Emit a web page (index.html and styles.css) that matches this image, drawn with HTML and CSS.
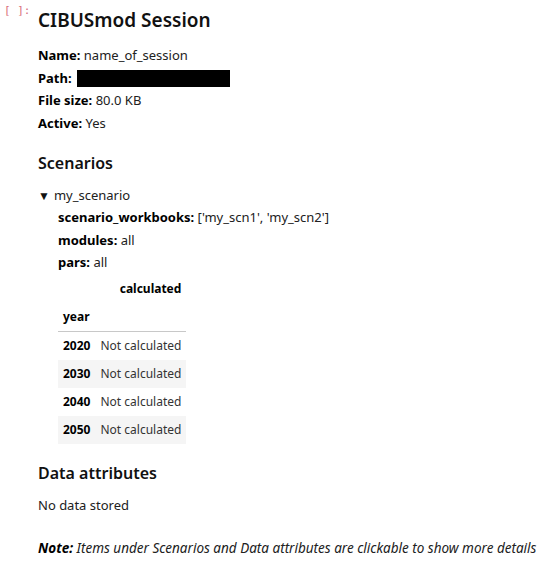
FILE: index.html
```html
<!DOCTYPE html>
<html>
<head>
<meta charset="utf-8">
<link rel="stylesheet" href="styles.css">
</head>
<body>
<div class="cell">
  <div class="prompt">[ ]:</div>
  <div class="output">
    <h2 class="title">CIBUSmod Session</h2>
    <div class="info">
      <div class="line"><b>Name:</b> name_of_session</div>
      <div class="line"><b>Path:</b> <span class="redact"></span></div>
      <div class="line"><b>File size:</b> 80.0 KB</div>
      <div class="line"><b>Active:</b> Yes</div>
    </div>
    <h3 class="section">Scenarios</h3>
    <div class="scenario">
      <div class="summary"><span class="tri">▼</span>my_scenario</div>
      <div class="details">
        <div class="line"><b>scenario_workbooks:</b> ['my_scn1', 'my_scn2']</div>
        <div class="line"><b>modules:</b> all</div>
        <div class="line"><b>pars:</b> all</div>
        <table class="df">
          <thead>
            <tr><th></th><th>calculated</th></tr>
            <tr class="idx"><th>year</th><th></th></tr>
          </thead>
          <tbody>
            <tr><th>2020</th><td>Not calculated</td></tr>
            <tr class="alt"><th>2030</th><td>Not calculated</td></tr>
            <tr><th>2040</th><td>Not calculated</td></tr>
            <tr class="alt"><th>2050</th><td>Not calculated</td></tr>
          </tbody>
        </table>
      </div>
    </div>
    <h3 class="section">Data attributes</h3>
    <div class="line nodata">No data stored</div>
    <div class="note"><b>Note:</b> Items under Scenarios and Data attributes are clickable to show more details</div>
  </div>
</div>
</body>
</html>
```
FILE: styles.css
```css
html, body {
  margin: 0;
  padding: 0;
  background: #ffffff;
}
body {
  font-family: "Noto Sans", "Open Sans", sans-serif;
  color: #212121;
  font-size: 13px;
}
.cell {
  display: flex;
}
.prompt {
  width: 38px;
  flex: none;
  font-family: "DejaVu Sans Mono", monospace;
  font-size: 11px;
  color: #d9707c;
  padding: 4px 0 0 4px;
  box-sizing: border-box;
  line-height: 14px;
}
.output {
  flex: 1;
}
.title {
  margin: 6px 0 0 0;
  font-size: 19px;
  font-weight: 600;
  line-height: 28px;
  color: #111;
}
.info {
  margin-top: 10px;
}
.line {
  line-height: 22.5px;
}
.line b {
  font-weight: 700;
  color: #000;
}
.redact {
  display: inline-block;
  width: 153px;
  height: 17px;
  background: #000;
  vertical-align: -4px;
  margin-left: 2px;
}
.section {
  margin: 17px 0 0 0;
  font-size: 16px;
  font-weight: 600;
  line-height: 24px;
  color: #111;
}
.scenario {
  margin-top: 10px;
}
.summary {
  line-height: 21px;
}
.tri {
  font-size: 12px;
  margin-right: 4px;
  color: #111;
}
.details {
  padding-left: 20px;
}
.df {
  border-collapse: collapse;
  border-spacing: 0;
  margin-top: 1px;
  font-size: 12px;
}
.df th, .df td {
  padding: 0 5px;
  height: 28px;
  text-align: right;
  vertical-align: middle;
}
.df th {
  font-weight: 700;
  color: #000;
}
.df td {
  color: #333;
}
.df thead tr.idx th {
  border-bottom: 1px solid #c8c8c8;
  text-align: left;
}
.df tbody tr.alt {
  background: #f5f5f5;
}
.nodata {
  margin-top: 9px;
}
.note {
  margin-top: 21px;
  font-size: 13.5px;
  font-style: italic;
  line-height: 22px;
}
.note b {
  font-weight: 700;
  color: #000;
}
```
